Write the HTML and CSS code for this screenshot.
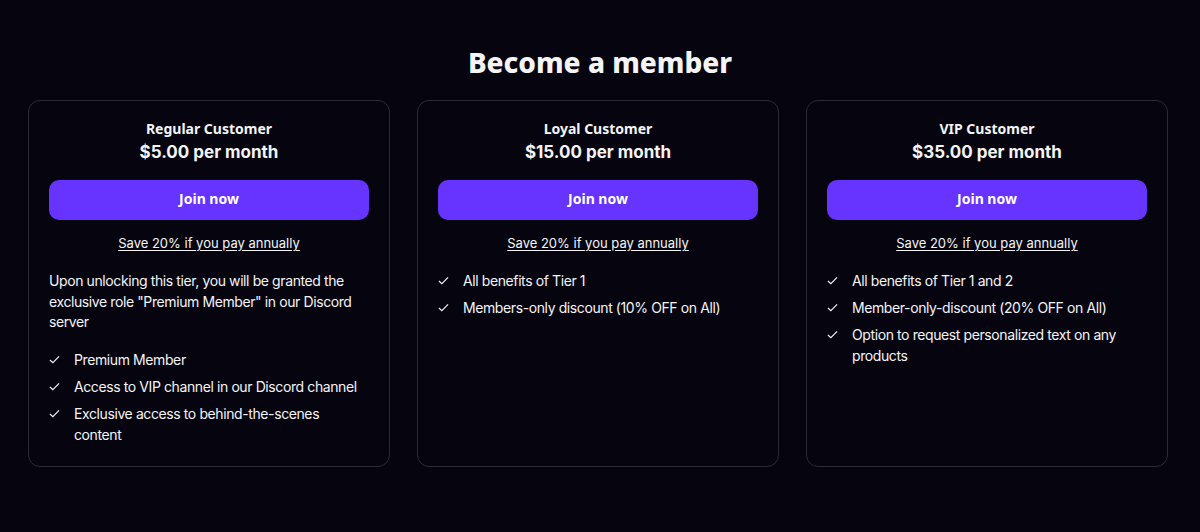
FILE: index.html
```html
<!DOCTYPE html>
<html>
<head>
<meta charset="utf-8">
<link rel="stylesheet" href="styles.css">
</head>
<body>
<main class="page">
  <h1 class="title">Become a member</h1>
  <div class="cards">
    <section class="card">
      <h2 class="tier">Regular Customer</h2>
      <div class="price">$5.00 per month</div>
      <button class="join">Join now</button>
      <a class="save" href="#">Save 20% if you pay annually</a>
      <p class="desc">Upon unlocking this tier, you will be granted the exclusive role "Premium Member" in our Discord server</p>
      <ul class="list">
        <li><svg class="check" viewBox="0 0 12 12"><path d="M1 6.5 L4.2 9.5 L11 2.5"/></svg><span>Premium Member</span></li>
        <li><svg class="check" viewBox="0 0 12 12"><path d="M1 6.5 L4.2 9.5 L11 2.5"/></svg><span>Access to VIP channel in our Discord channel</span></li>
        <li><svg class="check" viewBox="0 0 12 12"><path d="M1 6.5 L4.2 9.5 L11 2.5"/></svg><span>Exclusive access to behind-the-scenes content</span></li>
      </ul>
    </section>
    <section class="card">
      <h2 class="tier">Loyal Customer</h2>
      <div class="price">$15.00 per month</div>
      <button class="join">Join now</button>
      <a class="save" href="#">Save 20% if you pay annually</a>
      <ul class="list">
        <li><svg class="check" viewBox="0 0 12 12"><path d="M1 6.5 L4.2 9.5 L11 2.5"/></svg><span>All benefits of Tier 1</span></li>
        <li><svg class="check" viewBox="0 0 12 12"><path d="M1 6.5 L4.2 9.5 L11 2.5"/></svg><span>Members-only discount (10% OFF on All)</span></li>
      </ul>
    </section>
    <section class="card">
      <h2 class="tier">VIP Customer</h2>
      <div class="price">$35.00 per month</div>
      <button class="join">Join now</button>
      <a class="save" href="#">Save 20% if you pay annually</a>
      <ul class="list">
        <li><svg class="check" viewBox="0 0 12 12"><path d="M1 6.5 L4.2 9.5 L11 2.5"/></svg><span>All benefits of Tier 1 and 2</span></li>
        <li><svg class="check" viewBox="0 0 12 12"><path d="M1 6.5 L4.2 9.5 L11 2.5"/></svg><span>Member-only-discount (20% OFF on All)</span></li>
        <li><svg class="check" viewBox="0 0 12 12"><path d="M1 6.5 L4.2 9.5 L11 2.5"/></svg><span>Option to request personalized text on any products</span></li>
      </ul>
    </section>
  </div>
</main>
</body>
</html>
```
FILE: styles.css
```css
* { box-sizing: border-box; }
html, body { margin: 0; padding: 0; }
body {
  background: #06050f;
  color: #f4f4f6;
  font-family: Inter, "Noto Sans", sans-serif;
  width: 1200px;
  height: 532px;
  overflow: hidden;
}
.page {
  padding: 44px 28px 0;
}
.title {
  margin: 0 0 20px;
  text-align: center;
  font-family: "Noto Sans", Inter, sans-serif;
  font-weight: 800;
  font-size: 28px;
  line-height: 36px;
  letter-spacing: 0;
}
.cards {
  display: grid;
  grid-template-columns: repeat(3, 362px);
  column-gap: 27px;
  align-items: stretch;
}
.card {
  border: 1px solid #2b2a35;
  border-radius: 12px;
  padding: 18px 20px 21px;
  display: flex;
  flex-direction: column;
  align-items: stretch;
}
.tier {
  margin: 0;
  text-align: center;
  font-family: "Noto Sans", Inter, sans-serif;
  font-weight: 700;
  font-size: 14px;
  line-height: 20px;
}
.price {
  text-align: center;
  font-weight: 700;
  font-size: 17px;
  line-height: 26px;
  margin-bottom: 15px;
}
.join {
  height: 40px;
  border: none;
  border-radius: 10px;
  background: #6633ff;
  color: #fff;
  font-family: "Noto Sans", Inter, sans-serif;
  font-weight: 700;
  font-size: 14px;
  padding: 0 0 3px;
}
.save {
  margin-top: 13px;
  align-self: center;
  color: #f4f4f6;
  font-size: 13px;
  line-height: 20px;
  letter-spacing: 0;
  text-decoration: underline;
  text-underline-offset: 2px;
}
.desc {
  margin: 18px 0 0;
  font-size: 14px;
  line-height: 20.5px;
  letter-spacing: -0.4px;
}
.list {
  list-style: none;
  margin: 17px 0 0;
  padding: 0;
  display: flex;
  flex-direction: column;
  gap: 6px;
}
.desc + .list { margin-top: 16px; }
.list li {
  display: flex;
  align-items: flex-start;
  font-size: 14px;
  line-height: 21px;
  letter-spacing: -0.4px;
}
.check {
  flex: none;
  width: 11px;
  height: 11px;
  margin: 5px 14px 0 0;
  fill: none;
  stroke: #f4f4f6;
  stroke-width: 1.3;
}
```
